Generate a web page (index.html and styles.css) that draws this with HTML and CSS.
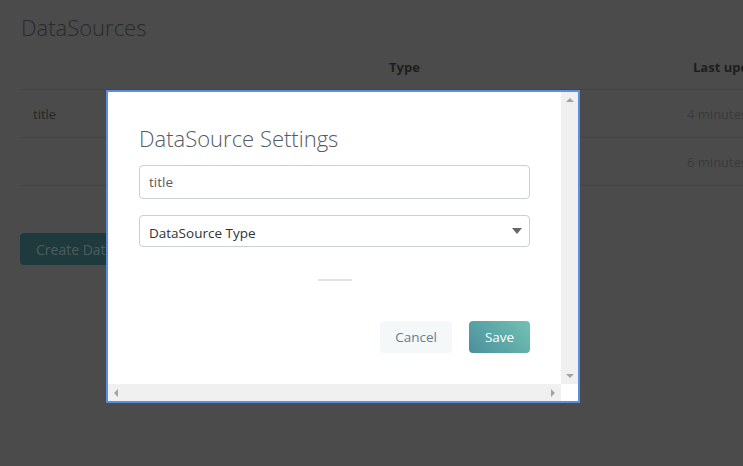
FILE: index.html
```html
<!DOCTYPE html>
<html>
<head>
<meta charset="utf-8">
<link rel="stylesheet" href="styles.css">
</head>
<body>
<div class="page">
  <h1 class="page-title">DataSources</h1>
  <div class="table">
    <div class="row head">
      <div class="cell"></div>
      <div class="cell">Type</div>
      <div class="cell last-head">Last updated</div>
    </div>
    <div class="row">
      <div class="cell">title</div>
      <div class="cell">JSON</div>
      <div class="cell muted">4 minutes ago</div>
    </div>
    <div class="row">
      <div class="cell"></div>
      <div class="cell"></div>
      <div class="cell muted">6 minutes ago</div>
    </div>
  </div>
  <button class="create-btn">Create DataSource</button>
</div>

<div class="modal">
  <div class="modal-viewport">
    <div class="modal-body">
      <h2 class="modal-title">DataSource Settings</h2>
      <div class="field input">title</div>
      <div class="field select">
        <span>DataSource Type</span>
        <span class="caret"></span>
      </div>
      <div class="loader"><span></span></div>
      <div class="actions">
        <button class="btn cancel">Cancel</button>
        <button class="btn save">Save</button>
      </div>
    </div>
    <div class="vscroll">
      <span class="arr up"></span>
      <span class="arr down"></span>
    </div>
  </div>
  <div class="bottom">
    <div class="hscroll">
      <span class="arr left"></span>
      <span class="arr right"></span>
    </div>
    <div class="corner"></div>
  </div>
</div>
</body>
</html>
```
FILE: styles.css
```css
* { box-sizing: border-box; }
html, body {
  margin: 0;
  padding: 0;
  width: 743px;
  height: 466px;
  overflow: hidden;
  background: #4b4b4b;
  font-family: "Open Sans", "Liberation Sans", sans-serif;
}
.page {
  padding: 12px 0 0 20px;
}
.page-title {
  margin: 0 0 0 1px;
  font-weight: 300;
  font-size: 22px;
  line-height: 30px;
  color: #2a2a2a;
}
.table {
  margin-top: 3px;
  width: 760px;
}
.row {
  display: grid;
  grid-template-columns: 356px 298px 1fr;
  height: 48px;
  align-items: center;
  border-bottom: 1px solid #444444;
  font-size: 13px;
  color: #262626;
}
.row.head {
  height: 45px;
  font-weight: 700;
  color: #1e1e1e;
}
.cell {
  padding-left: 13px;
  white-space: nowrap;
}
.cell.last-head { padding-left: 19px; }
.cell.muted { color: #3a3a3a; }
.create-btn {
  margin-top: 47px;
  height: 32px;
  padding: 0 16px;
  border: none;
  border-radius: 4px;
  background: #1f3a3c;
  color: #4b5c5e;
  font-family: inherit;
  font-size: 14px;
}

.modal {
  position: absolute;
  left: 106px;
  top: 90px;
  width: 474px;
  height: 313px;
  border: 2px solid #5b8ee0;
  background: #ffffff;
  display: flex;
  flex-direction: column;
}
.modal-viewport {
  flex: 1;
  display: flex;
}
.modal-body {
  flex: 1;
  padding: 28px 31px 0 31px;
}
.modal-title {
  margin: 0;
  font-weight: 300;
  font-size: 22px;
  line-height: 36px;
  color: #555b60;
}
.field {
  height: 34px;
  border: 1px solid #c9d0d3;
  border-radius: 4px;
  padding: 0 9px;
  display: flex;
  align-items: center;
  font-size: 13.5px;
}
.input {
  margin-top: 9px;
  color: #5a5a5a;
}
.select {
  margin-top: 16px;
  height: 32px;
  padding-top: 3px;
  justify-content: space-between;
  color: #333333;
}
.caret {
  width: 0;
  height: 0;
  border-left: 5.5px solid transparent;
  border-right: 5.5px solid transparent;
  border-top: 6px solid #666666;
  margin-right: -2px;
  margin-top: -3px;
}
.loader {
  display: flex;
  justify-content: center;
  margin-top: 32px;
}
.loader span {
  display: block;
  width: 34px;
  height: 2px;
  background: #e2e2e2;
}
.actions {
  display: flex;
  justify-content: flex-end;
  gap: 17px;
  margin-top: 40px;
}
.btn {
  height: 32px;
  border: none;
  border-radius: 4px;
  font-family: inherit;
  font-size: 13.5px;
}
.cancel {
  width: 72px;
  background: #f4f8f9;
  color: #6d7c8c;
}
.save {
  width: 61px;
  background: linear-gradient(45deg, #4a8f9d 0%, #72c2b3 100%);
  color: #ffffff;
}
.vscroll {
  width: 17px;
  background: #f0f0f0;
  display: flex;
  flex-direction: column;
  justify-content: space-between;
  align-items: center;
  padding: 6px 0 6px;
}
.bottom {
  height: 17px;
  display: flex;
}
.hscroll {
  flex: 1;
  background: #f0f0f0;
  display: flex;
  justify-content: space-between;
  align-items: center;
  padding: 0 6px;
}
.corner {
  width: 17px;
  background: #ffffff;
}
.arr {
  width: 0;
  height: 0;
  display: block;
}
.arr.up {
  border-left: 4px solid transparent;
  border-right: 4px solid transparent;
  border-bottom: 4px solid #a3a3a3;
}
.arr.down {
  border-left: 4px solid transparent;
  border-right: 4px solid transparent;
  border-top: 4px solid #a3a3a3;
}
.arr.left {
  border-top: 4px solid transparent;
  border-bottom: 4px solid transparent;
  border-right: 4px solid #a3a3a3;
}
.arr.right {
  border-top: 4px solid transparent;
  border-bottom: 4px solid transparent;
  border-left: 4px solid #a3a3a3;
}
```
